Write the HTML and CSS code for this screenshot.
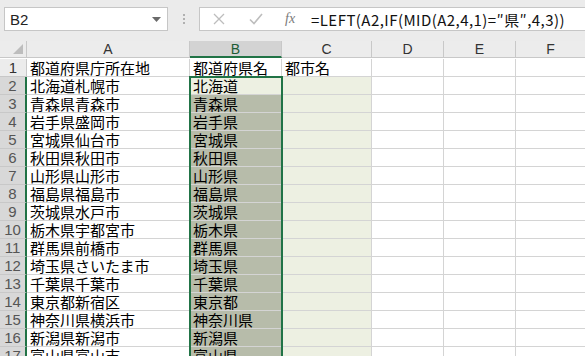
FILE: index.html
```html
<!DOCTYPE html>
<html lang="ja">
<head>
  <meta charset="UTF-8" />
  <title>Excel - 都道府県</title>
  <link rel="stylesheet" href="styles.css">
</head>
<body>
  <div class="toolbar">
    <div class="namebox">
      <span>B2</span>
      <svg class="drop" width="9" height="5" viewBox="0 0 9 5"><path d="M0 0h9L4.5 5z" fill="#6a6a6a"/></svg>
    </div>
    <div class="grip"><i></i><i></i><i></i></div>
    <div class="fbar">
      <div class="fbtns">
        <svg width="12" height="12" viewBox="0 0 12 12"><path d="M1 1l10 10M11 1L1 11" stroke="#bdbdbd" stroke-width="1.3"/></svg>
        <svg width="14" height="12" viewBox="0 0 14 12"><path d="M1 6.5l4 4L13 1" stroke="#bdbdbd" stroke-width="1.6" fill="none"/></svg>
        <span class="fx">fx</span>
      </div>
      <div class="formula">=LEFT(A2,IF(MID(A2,4,1)=″県″,4,3))</div>
    </div>
  </div>

  <div class="sheet">
    <div class="grid">
      <div class="corner"><svg width="10" height="10" viewBox="0 0 10 10"><path d="M10 0v10H0z" fill="#bdbdbd"/></svg></div>
      <div class="colhead">A</div>
      <div class="colhead sel">B</div>
      <div class="colhead">C</div>
      <div class="colhead">D</div>
      <div class="colhead">E</div>
      <div class="colhead">F</div>

      <div class="rowhead">1</div>
      <div class="cell">都道府県庁所在地</div>
      <div class="cell">都道府県名</div>
      <div class="cell">都市名</div>
      <div class="cell"></div><div class="cell"></div><div class="cell"></div>

      <div class="rowhead on">2</div>
      <div class="cell">北海道札幌市</div>
      <div class="cell fill">北海道</div>
      <div class="cell fill"></div>
      <div class="cell"></div><div class="cell"></div><div class="cell"></div>

      <div class="rowhead on">3</div>
      <div class="cell">青森県青森市</div>
      <div class="cell picked">青森県</div>
      <div class="cell fill"></div>
      <div class="cell"></div><div class="cell"></div><div class="cell"></div>

      <div class="rowhead on">4</div>
      <div class="cell">岩手県盛岡市</div>
      <div class="cell picked">岩手県</div>
      <div class="cell fill"></div>
      <div class="cell"></div><div class="cell"></div><div class="cell"></div>

      <div class="rowhead on">5</div>
      <div class="cell">宮城県仙台市</div>
      <div class="cell picked">宮城県</div>
      <div class="cell fill"></div>
      <div class="cell"></div><div class="cell"></div><div class="cell"></div>

      <div class="rowhead on">6</div>
      <div class="cell">秋田県秋田市</div>
      <div class="cell picked">秋田県</div>
      <div class="cell fill"></div>
      <div class="cell"></div><div class="cell"></div><div class="cell"></div>

      <div class="rowhead on">7</div>
      <div class="cell">山形県山形市</div>
      <div class="cell picked">山形県</div>
      <div class="cell fill"></div>
      <div class="cell"></div><div class="cell"></div><div class="cell"></div>

      <div class="rowhead on">8</div>
      <div class="cell">福島県福島市</div>
      <div class="cell picked">福島県</div>
      <div class="cell fill"></div>
      <div class="cell"></div><div class="cell"></div><div class="cell"></div>

      <div class="rowhead on">9</div>
      <div class="cell">茨城県水戸市</div>
      <div class="cell picked">茨城県</div>
      <div class="cell fill"></div>
      <div class="cell"></div><div class="cell"></div><div class="cell"></div>

      <div class="rowhead on">10</div>
      <div class="cell">栃木県宇都宮市</div>
      <div class="cell picked">栃木県</div>
      <div class="cell fill"></div>
      <div class="cell"></div><div class="cell"></div><div class="cell"></div>

      <div class="rowhead on">11</div>
      <div class="cell">群馬県前橋市</div>
      <div class="cell picked">群馬県</div>
      <div class="cell fill"></div>
      <div class="cell"></div><div class="cell"></div><div class="cell"></div>

      <div class="rowhead on">12</div>
      <div class="cell">埼玉県さいたま市</div>
      <div class="cell picked">埼玉県</div>
      <div class="cell fill"></div>
      <div class="cell"></div><div class="cell"></div><div class="cell"></div>

      <div class="rowhead on">13</div>
      <div class="cell">千葉県千葉市</div>
      <div class="cell picked">千葉県</div>
      <div class="cell fill"></div>
      <div class="cell"></div><div class="cell"></div><div class="cell"></div>

      <div class="rowhead on">14</div>
      <div class="cell">東京都新宿区</div>
      <div class="cell picked">東京都</div>
      <div class="cell fill"></div>
      <div class="cell"></div><div class="cell"></div><div class="cell"></div>

      <div class="rowhead on">15</div>
      <div class="cell">神奈川県横浜市</div>
      <div class="cell picked">神奈川県</div>
      <div class="cell fill"></div>
      <div class="cell"></div><div class="cell"></div><div class="cell"></div>

      <div class="rowhead on">16</div>
      <div class="cell">新潟県新潟市</div>
      <div class="cell picked">新潟県</div>
      <div class="cell fill"></div>
      <div class="cell"></div><div class="cell"></div><div class="cell"></div>

      <div class="rowhead on">17</div>
      <div class="cell">富山県富山市</div>
      <div class="cell picked">富山県</div>
      <div class="cell fill"></div>
      <div class="cell"></div><div class="cell"></div><div class="cell"></div>
    </div>
    <div class="selection"></div>
  </div>
</body>
</html>
```

FILE: styles.css
```css
html, body {
  margin: 0;
  overflow: hidden;
}
body {
  background: #ffffff;
  font-family: "Noto Sans CJK JP", "Liberation Sans", sans-serif;
  color: #000;
}
.toolbar {
  height: 41px;
  background: #ebebeb;
  display: flex;
  align-items: flex-start;
  padding-top: 7px;
  box-sizing: border-box;
}
.namebox {
  margin-left: 4px;
  width: 164px;
  height: 24px;
  background: #fff;
  border: 1px solid #c6c6c6;
  box-sizing: border-box;
  display: flex;
  align-items: center;
  justify-content: space-between;
  padding: 0 6px 0 5px;
  font-family: "Liberation Sans", sans-serif;
  font-size: 15px;
  color: #222;
}
.grip {
  width: 31px;
  height: 24px;
  display: flex;
  flex-direction: column;
  align-items: center;
  justify-content: center;
  gap: 2px;
}
.grip i {
  width: 2px;
  height: 2px;
  background: #b0b0b0;
}
.fbar {
  flex: 1;
  height: 24px;
  background: #fff;
  border: 1px solid #c6c6c6;
  border-right: none;
  box-sizing: border-box;
  display: flex;
  align-items: center;
}
.fbtns {
  width: 103px;
  display: flex;
  align-items: center;
  padding-left: 13px;
  gap: 24px;
  box-sizing: border-box;
}
.fx {
  font-family: "Liberation Serif", serif;
  font-style: italic;
  font-size: 14px;
  color: #7a7a7a;
  margin-left: -2px;
}
.formula {
  padding-left: 8px;
  font-size: 15px;
  letter-spacing: 0.45px;
  color: #111;
  white-space: nowrap;
}
.sheet {
  position: relative;
}
.grid {
  display: grid;
  grid-template-columns: 27px 163px 92px 90px 72px 72px 70px;
  grid-auto-rows: 18px;
}
.corner, .colhead, .rowhead, .cell {
  box-sizing: border-box;
  border-right: 1px solid #d4d4d4;
  border-bottom: 1px solid #d4d4d4;
  white-space: nowrap;
  overflow: hidden;
}
.corner, .colhead {
  height: 17px;
  background: #ececec;
  border-color: #c8c8c8;
}
.corner {
  display: flex;
  align-items: flex-end;
  justify-content: flex-end;
  padding: 0 3px 3px 0;
}
.colhead {
  font-family: "Liberation Sans", sans-serif;
  font-size: 14px;
  line-height: 16px;
  text-align: center;
  color: #333;
}
.colhead.sel {
  background: #d3d3d3;
  border-bottom: 2px solid #217346;
  color: #1e5c36;
}
.rowhead {
  background: #ececec;
  border-color: #c8c8c8;
  font-family: "Liberation Sans", sans-serif;
  font-size: 15px;
  line-height: 17px;
  text-align: center;
  color: #333;
}
.rowhead.on {
  background: #d8d8d8;
  color: #555;
  border-right: 2px solid #217346;
}
.cell {
  font-size: 15px;
  line-height: 17px;
  padding-left: 3px;
}
.cell.fill {
  background: #edf0e2;
}
.cell.picked {
  background: #b7bcaa;
}
.selection {
  position: absolute;
  left: 189px;
  top: 35px;
  width: 94px;
  height: 300px;
  border: 2px solid #217346;
  box-sizing: border-box;
  pointer-events: none;
}
```
